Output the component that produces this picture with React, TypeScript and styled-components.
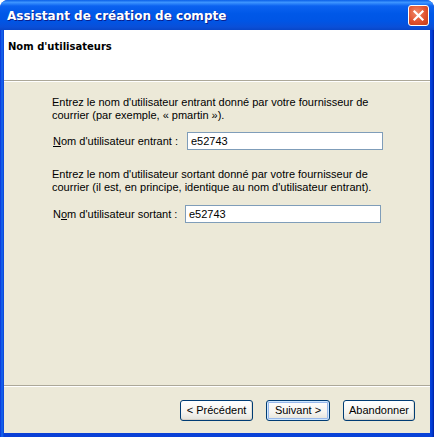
import React from 'react'
import styled, { createGlobalStyle } from 'styled-components'

const Global = createGlobalStyle`
  html, body { margin: 0; padding: 0; background: #ffffff; }
  body { font-family: "Liberation Sans", Arial, sans-serif; font-size: 11px; }
`

const Window = styled.div`
  width: 434px;
  height: 437px;
  display: flex;
  flex-direction: column;
  background: linear-gradient(90deg, #0831d9 0px, #166aee 2px, #0a3fd6 4px, #0842d8 430px, #003dd7 432px, #001ea0 434px);
  border-radius: 8px 8px 0 0;
  overflow: hidden;
  box-sizing: border-box;
`

const TitleBar = styled.div`
  height: 30px;
  flex: 0 0 30px;
  display: flex;
  align-items: center;
  justify-content: space-between;
  padding: 0 5px 0 7px;
  background: linear-gradient(180deg, #0a5fe8 0%, #3d95ff 8%, #0b62f0 20%, #0058e8 45%, #0055e5 70%, #0a4fd8 90%, #0846c8 100%);
  box-sizing: border-box;
`

const Title = styled.span`
  color: #ffffff;
  font-family: "DejaVu Sans", Verdana, sans-serif;
  font-weight: bold;
  font-size: 12px;
  text-shadow: 1px 1px 0 #0a1e8c;
  letter-spacing: 0px;
  padding-top: 1px;
`

const CloseButton = styled.div`
  width: 21px;
  height: 21px;
  box-sizing: border-box;
  border: 1px solid #ffffff;
  border-radius: 3px;
  background: radial-gradient(circle at 40% 35%, #f08a6a 0%, #e0512e 55%, #c13a16 100%);
  display: flex;
  align-items: center;
  justify-content: center;
  margin-top: 1px;
`

const Client = styled.div`
  flex: 1;
  margin: 0 4px 4px 4px;
  background: #ece9d8;
  display: flex;
  flex-direction: column;
`

const Header = styled.div`
  height: 51px;
  flex: 0 0 51px;
  background: #ffffff;
  border-bottom: 1px solid #aca899;
  box-sizing: border-box;
  padding: 11px 0 0 4px;
`

const HeaderTitle = styled.div`
  font-family: "DejaVu Sans", Verdana, sans-serif;
  font-weight: bold;
  font-size: 10px;
  color: #000000;
`

const Body = styled.div`
  flex: 1;
  border-top: 1px solid #ffffff;
  padding: 14px 0 0 48px;
  display: flex;
  flex-direction: column;
`

const Paragraph = styled.p<{ $top?: number }>`
  margin: ${p => p.$top ?? 0}px 0 0 0;
  line-height: 13px;
  font-size: 11px;
  color: #000000;
  width: 340px;
`

const Row = styled.div<{ $top: number; $inputLeft: number }>`
  display: grid;
  grid-template-columns: ${p => p.$inputLeft}px 196px;
  align-items: center;
  margin-top: ${p => p.$top}px;
`

const Label = styled.label`
  font-size: 11px;
  color: #000000;
  padding-left: 1px;
  u { text-decoration: underline; }
`

const TextBox = styled.div`
  height: 18px;
  box-sizing: border-box;
  border: 1px solid #7f9db9;
  background: #ffffff;
  font-size: 11px;
  padding: 2px 0 0 3px;
  color: #000000;
`

const Footer = styled.div`
  flex: 0 0 48px;
  height: 48px;
  border-top: 1px solid #aca899;
  box-shadow: inset 0 1px 0 #ffffff;
  display: flex;
  justify-content: flex-end;
  align-items: flex-start;
  padding: 14px 15px 0 0;
  gap: 13px;
  box-sizing: border-box;
`

const Button = styled.div<{ $w: number; $default?: boolean }>`
  width: ${p => p.$w}px;
  height: 21px;
  box-sizing: border-box;
  border: 1px solid #003c74;
  border-radius: 3px;
  background: linear-gradient(180deg, #ffffff 0%, #f5f4ef 60%, #e3e2da 100%);
  box-shadow: ${p => p.$default
    ? 'inset 0 0 0 1px #cee7ff, inset 0 0 0 2px #98b8ea'
    : 'inset 0 -1px 0 #d6d0c5, inset -1px 0 0 #e3e0d6'};
  display: flex;
  align-items: center;
  justify-content: center;
  font-size: 11px;
  color: #000000;
  padding-bottom: 1px;
`

export default function App() {
  return (
    <>
      <Global />
      <Window>
        <TitleBar>
          <Title>Assistant de création de compte</Title>
          <CloseButton>
            <svg width="13" height="13" viewBox="0 0 13 13">
              <path d="M2.5 2.5 L10.5 10.5 M10.5 2.5 L2.5 10.5" stroke="#ffffff" strokeWidth="2.2" strokeLinecap="square" />
            </svg>
          </CloseButton>
        </TitleBar>
        <Client>
          <Header>
            <HeaderTitle>Nom d'utilisateurs</HeaderTitle>
          </Header>
          <Body>
            <Paragraph>
              Entrez le nom d'utilisateur entrant donné par votre fournisseur de<br />
              courrier (par exemple, « pmartin »).
            </Paragraph>
            <Row $top={10} $inputLeft={135}>
              <Label><u>N</u>om d'utilisateur entrant :</Label>
              <TextBox>e52743</TextBox>
            </Row>
            <Paragraph $top={18}>
              Entrez le nom d'utilisateur sortant donné par votre fournisseur de<br />
              courrier (il est, en principe, identique au nom d'utilisateur entrant).
            </Paragraph>
            <Row $top={11} $inputLeft={133}>
              <Label>N<u>o</u>m d'utilisateur sortant :</Label>
              <TextBox>e52743</TextBox>
            </Row>
          </Body>
          <Footer>
            <Button $w={73}>&lt; Précédent</Button>
            <Button $w={64} $default>Suivant &gt;</Button>
            <Button $w={72}>Abandonner</Button>
          </Footer>
        </Client>
      </Window>
    </>
  )
}
